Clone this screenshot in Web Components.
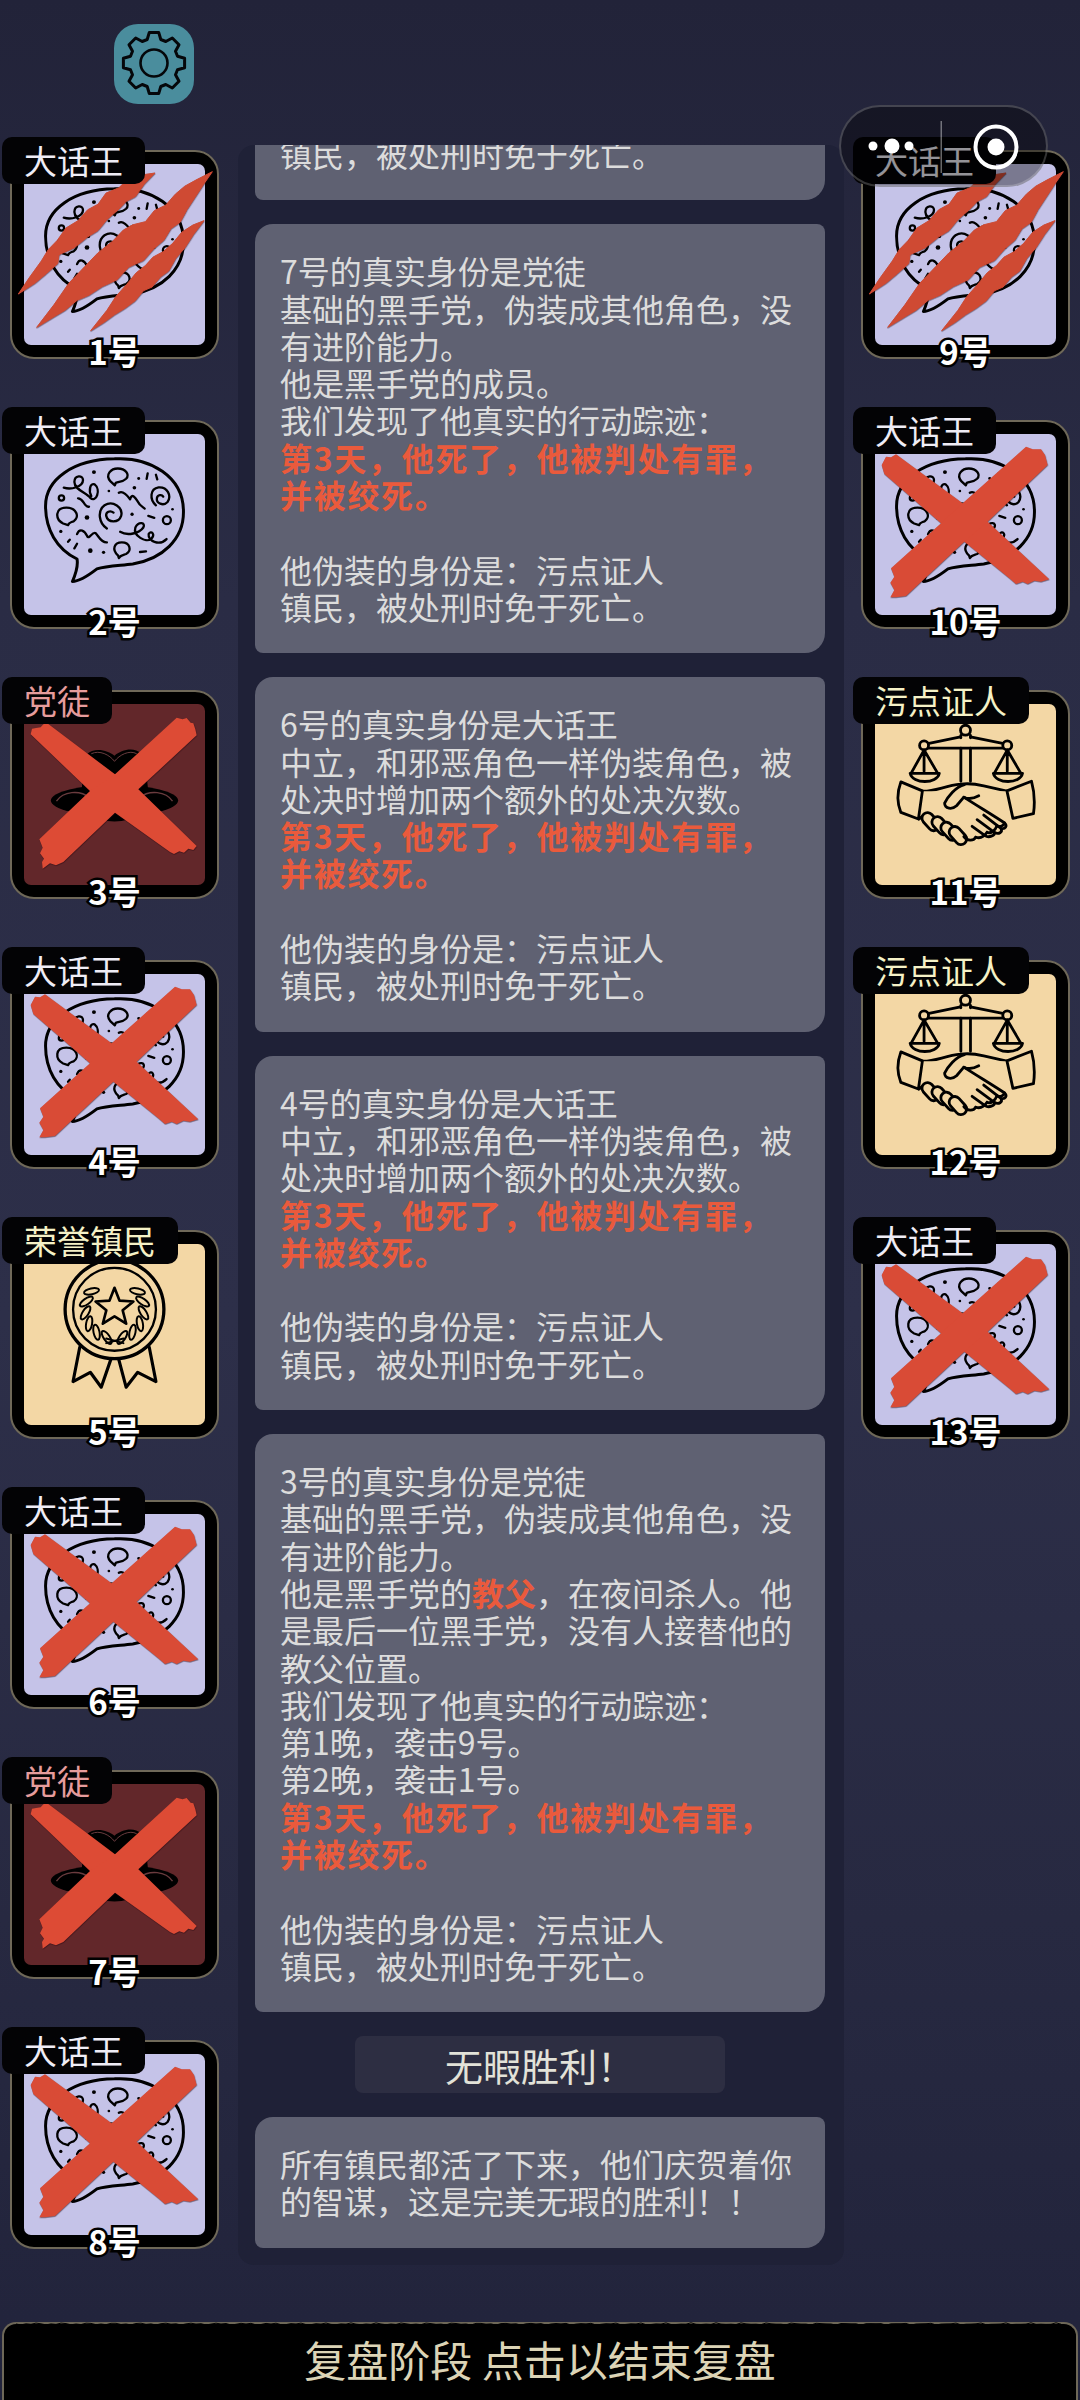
<!DOCTYPE html>
<html lang="zh">
<head>
<meta charset="utf-8">
<title>复盘</title>
<style>
  body { margin: 0; background: #22233a; font-family: "Noto Sans CJK SC", "Noto Sans", sans-serif; }
</style>
</head>
<body>
<review-page>
  <settings-button slot="top"></settings-button>
  <wechat-capsule slot="overlay"></wechat-capsule>

  <role-column slot="left">
    <role-card num="1号" role="大话王" kind="talker" mark="claw"></role-card>
    <role-card num="2号" role="大话王" kind="talker"></role-card>
    <role-card num="3号" role="党徒" kind="party" mark="x"></role-card>
    <role-card num="4号" role="大话王" kind="talker" mark="x"></role-card>
    <role-card num="5号" role="荣誉镇民" kind="honor"></role-card>
    <role-card num="6号" role="大话王" kind="talker" mark="x"></role-card>
    <role-card num="7号" role="党徒" kind="party" mark="x"></role-card>
    <role-card num="8号" role="大话王" kind="talker" mark="x"></role-card>
  </role-column>

  <msg-panel slot="center">
    <msg-card clipped>镇民&#xFF0C;被处刑时免于死亡。</msg-card>
    <msg-card>7号的真实身份是党徒<br>基础的黑手党&#xFF0C;伪装成其他角色&#xFF0C;没有进阶能力。<br>他是黑手党的成员。<br>我们发现了他真实的行动踪迹&#xFF1A;<br><em class="death">第3天&#xFF0C;他死了&#xFF0C;他被判处有罪&#xFF0C;<br>并被绞死。</em><br><br>他伪装的身份是&#xFF1A;污点证人<br>镇民&#xFF0C;被处刑时免于死亡。</msg-card>
    <msg-card>6号的真实身份是大话王<br>中立&#xFF0C;和邪恶角色一样伪装角色&#xFF0C;被处决时增加两个额外的处决次数。<br><em class="death">第3天&#xFF0C;他死了&#xFF0C;他被判处有罪&#xFF0C;<br>并被绞死。</em><br><br>他伪装的身份是&#xFF1A;污点证人<br>镇民&#xFF0C;被处刑时免于死亡。</msg-card>
    <msg-card>4号的真实身份是大话王<br>中立&#xFF0C;和邪恶角色一样伪装角色&#xFF0C;被处决时增加两个额外的处决次数。<br><em class="death">第3天&#xFF0C;他死了&#xFF0C;他被判处有罪&#xFF0C;<br>并被绞死。</em><br><br>他伪装的身份是&#xFF1A;污点证人<br>镇民&#xFF0C;被处刑时免于死亡。</msg-card>
    <msg-card>3号的真实身份是党徒<br>基础的黑手党&#xFF0C;伪装成其他角色&#xFF0C;没有进阶能力。<br>他是黑手党的<em>教父</em>&#xFF0C;在夜间杀人。他是最后一位黑手党&#xFF0C;没有人接替他的教父位置。<br>我们发现了他真实的行动踪迹&#xFF1A;<br>第1晚&#xFF0C;袭击9号。<br>第2晚&#xFF0C;袭击1号。<br><em class="death">第3天&#xFF0C;他死了&#xFF0C;他被判处有罪&#xFF0C;<br>并被绞死。</em><br><br>他伪装的身份是&#xFF1A;污点证人<br>镇民&#xFF0C;被处刑时免于死亡。</msg-card>
    <result-title>无暇胜利&#xFF01;</result-title>
    <msg-card>所有镇民都活了下来&#xFF0C;他们庆贺着你的智谋&#xFF0C;这是完美无瑕的胜利&#xFF01;&#xFF01;</msg-card>
  </msg-panel>

  <role-column slot="right" side="right">
    <role-card num="9号" role="大话王" kind="talker" mark="claw"></role-card>
    <role-card num="10号" role="大话王" kind="talker" mark="x"></role-card>
    <role-card num="11号" role="污点证人" kind="witness"></role-card>
    <role-card num="12号" role="污点证人" kind="witness"></role-card>
    <role-card num="13号" role="大话王" kind="talker" mark="x"></role-card>
  </role-column>

  <review-bar slot="bottom">复盘阶段 点击以结束复盘</review-bar>
</review-page>

<script>
const FONT = `"Noto Sans CJK SC", "Noto Sans", sans-serif`;

class ReviewPage extends HTMLElement {
    constructor() {
        super();
        this.attachShadow({mode: "open"});
        this.shadowRoot.innerHTML = `
        <style>
            :host {
                display: flex;
                flex-direction: column;
                position: relative;
                width: 1080px;
                height: 2400px;
                overflow: hidden;
                font-family: ${FONT};
                background: linear-gradient(#222339 0%, #2a2c45 25%, #2d2f49 55%, #272941 80%, #21233b 100%);
            }
            .top { height: 145px; box-sizing: border-box; padding: 24px 0 0 114px; }
            .main {
                display: grid;
                grid-template-columns: 238px 606px 236px;
                height: 2120px;
            }
            .bottom { margin-top: auto; }
        </style>
        <div class="top"><slot name="top"></slot></div>
        <div class="main">
            <slot name="left"></slot>
            <slot name="center"></slot>
            <slot name="right"></slot>
        </div>
        <div class="bottom"><slot name="bottom"></slot></div>
        <slot name="overlay"></slot>
        `;
    }
}

function gearPath(cx, cy, outer, root, teeth) {
    let d = "";
    const step = Math.PI * 2 / teeth;
    for (let i = 0; i < teeth; i++) {
        const a = -Math.PI / 2 + i * step;
        const pts = [[root, -0.5], [outer, -0.27], [outer, 0.27], [root, 0.5]];
        pts.forEach(([r, k], j) => {
            const t = a + k * step * 0.72;
            d += (i === 0 && j === 0 ? "M" : "L") + (cx + r * Math.cos(t)).toFixed(1) + " " + (cy + r * Math.sin(t)).toFixed(1);
        });
    }
    return d + "Z";
}

class SettingsButton extends HTMLElement {
    constructor() {
        super();
        this.attachShadow({mode: "open"});
        this.shadowRoot.innerHTML = `
        <style>
            :host {
                display: flex;
                width: 80px;
                height: 80px;
                border-radius: 24px;
                background: #4a8d9d;
            }
            svg { width: 80px; height: 80px; }
        </style>
        <svg viewBox="0 0 80 80" fill="none" stroke="#05070a">
            <path d="${gearPath(40, 39, 31, 24.5, 8)}" stroke-width="3" stroke-linejoin="round"/>
            <circle cx="40" cy="39" r="13.5" stroke-width="2.6"/>
        </svg>
        `;
    }
}

class WechatCapsule extends HTMLElement {
    constructor() {
        super();
        this.attachShadow({mode: "open"});
        this.shadowRoot.innerHTML = `
        <style>
            :host {
                position: absolute;
                left: 839px;
                top: 105px;
                width: 209px;
                height: 82px;
                box-sizing: border-box;
                border: 2px solid rgba(255, 255, 255, 0.2);
                border-radius: 41px;
                background: rgba(0, 0, 0, 0.38);
            }
            svg { display: block; position: absolute; left: -2px; top: -2px; }
        </style>
        <svg width="209" height="82" viewBox="0 0 209 82" fill="#fff">
            <circle cx="34" cy="41" r="4.5"/>
            <circle cx="53" cy="41" r="7.5"/>
            <circle cx="70" cy="41" r="4.5"/>
            <rect x="101.5" y="16" width="1.5" height="52" fill="rgba(255,255,255,0.4)"/>
            <circle cx="157" cy="42" r="20.5" fill="none" stroke="#fff" stroke-width="4"/>
            <circle cx="157" cy="42" r="8.5"/>
        </svg>
        `;
    }
}

class RoleColumn extends HTMLElement {
    constructor() {
        super();
        this.attachShadow({mode: "open"});
        this.shadowRoot.innerHTML = `
        <style>
            :host {
                display: flex;
                flex-direction: column;
                gap: 61px;
                padding: 5px 0 0 10px;
            }
            :host([side="right"]) { padding-left: 17px; }
        </style>
        <slot></slot>
        `;
    }
}

// art is drawn in the coordinates of a 3x crop, the viewBox moves it into the card
const dot = (x, y, r) => `<circle cx="${x}" cy="${y}" r="${r}" fill="#000" stroke="none"/>`;
const talkerArt = `
<svg viewBox="72 103 546 546" fill="none" stroke="#000" stroke-width="7" stroke-linecap="round" stroke-linejoin="round">
    <path stroke-width="9" d="M345 178C450 172 555 230 553 340C553 420 490 480 400 495C360 500 320 500 292 510C270 527 240 548 218 548C226 530 236 503 232 480C170 450 137 390 137 320C137 240 220 180 345 178Z"/>
    <path d="M192 265C215 272 250 262 250 242C250 226 224 226 224 248C224 272 262 280 272 296C290 312 305 270 285 255C272 250 266 272 275 290"/>
    <path d="M333 246C315 225 335 207 355 207C378 207 392 225 380 238C370 248 358 246 349 250L346 258Z"/>
    <path d="M190 373C165 360 165 325 200 325C232 325 240 355 222 366C214 370 208 368 205 378Z"/>
    <path d="M356 470C335 450 345 430 367 430C392 430 398 455 380 465C372 468 364 468 358 477Z"/>
    <circle cx="185" cy="296" r="8"/><circle cx="503" cy="363" r="12"/>
    <path d="M235 297C248 297 250 310 258 318C262 322 266 323 268 322"/>
    <path d="M322 388C298 372 292 335 315 318C340 302 372 325 365 350C358 372 325 372 320 350C318 338 332 332 342 340"/>
    <path d="M470 318C450 300 452 268 478 264C505 262 518 290 505 308C492 322 470 312 473 296C475 286 488 285 492 292"/>
    <path d="M358 280C372 272 385 290 392 300C398 280 408 295 414 305C420 318 428 322 436 328"/>
    <path d="M362 398C385 412 420 402 432 385C440 370 418 365 408 385C400 410 440 432 455 420C470 405 455 392 448 405C445 425 480 442 502 420"/>
    <path d="M232 405C240 385 255 395 262 410C268 425 278 395 288 402C298 412 305 432 322 430"/>
    <path d="M445 222L442 238M470 226L474 240M447 350L465 356M205 428L210 422M232 434L224 448M422 459L440 457"/>
    ${dot(283,218,6)}${dot(418,237,4.5)}${dot(405,265,5.5)}${dot(328,275,4)}${dot(262,355,7)}${dot(398,345,5)}${dot(520,330,4)}${dot(183,397,5)}${dot(272,455,7)}${dot(312,460,5)}
</svg>`;

const scaleSide = (x) => `
    <circle cx="${x}" cy="228" r="13.5" fill="#f3d7a5"/>
    <path d="M${x} 242L${x - 38} 310M${x} 242L${x + 40} 310M${x} 242V306"/>
    <path d="M${x - 42} 312H${x + 46}C${x + 40} 345 ${x - 35} 345 ${x - 42} 312Z"/>`;
const finger = (x, y) => `<rect x="${x - 17}" y="${y - 31}" width="34" height="62" rx="17" fill="#f3d7a5" transform="rotate(-42 ${x} ${y})"/>`;
const witnessArt = `
<svg viewBox="162 103 546 546" fill="none" stroke="#000" stroke-width="8.5" stroke-linecap="round" stroke-linejoin="round">
    <path d="M325 222L420 202M450 202L547 222M322 236H548"/>
    <path d="M421 236V336M450 236V336"/>
    <circle cx="435" cy="182" r="15" fill="#f3d7a5"/>
    <path d="M421 198V205M450 198V205"/>
    ${scaleSide(310)}${scaleSide(561)}
    <path d="M304 366C340 368 372 350 420 345C440 342 465 344 490 350L560 366" fill="#f3d7a5"/>
    <path d="M304 366L295 450C330 480 400 515 440 515C480 510 530 490 578 448L560 366"  fill="#f3d7a5" stroke="none"/>
    <path d="M295 450C302 444 306 438 314 436"/>
    ${finger(330,458)}${finger(360,470)}${finger(387,487)}${finger(412,500)}
    <path d="M430 503C440 516 458 518 466 505"/>
    <path d="M466 505C476 508 490 505 500 490M500 490C510 494 524 488 530 470M530 470C540 475 550 470 553 462"/>
    <path d="M430 384C470 410 520 440 553 462C562 470 555 482 542 478L490 438M542 478C548 490 535 498 522 490L470 452M522 490C525 500 505 508 494 500L455 472"/>
    <path d="M432 346C405 352 380 385 372 402C372 420 395 422 408 410L430 384C445 392 460 388 475 380"/>
    <path d="M240 338L305 365L293 450L240 430C228 400 230 365 240 338Z" fill="#f3d7a5"/>
    <path d="M634 336L560 365L578 448L640 434C645 400 642 365 634 336Z" fill="#f3d7a5"/>
</svg>`;

function laurel() {
    let out = "";
    for (let i = 0; i < 6; i++) {
        const a = (218 - i * 22.5) * Math.PI / 180;
        const x = 345 + 88 * Math.cos(a), y = 330 + 88 * Math.sin(a);
        const rot = (218 - i * 22.5) - 50;
        [x, 690 - x].forEach((px, side) => {
            const r = side ? 180 - rot : rot;
            out += `<ellipse cx="${px.toFixed(1)}" cy="${y.toFixed(1)}" rx="23" ry="9" transform="rotate(${r} ${px.toFixed(1)} ${y.toFixed(1)})"/>`;
        });
    }
    return out;
}
function starPoints(cx, cy, R, r) {
    const pts = [];
    for (let i = 0; i < 10; i++) {
        const a = -Math.PI / 2 + i * Math.PI / 5, q = i % 2 ? r : R;
        pts.push((cx + q * Math.cos(a)).toFixed(1) + "," + (cy + q * Math.sin(a)).toFixed(1));
    }
    return pts.join(" ");
}
const honorArt = `
<svg viewBox="72 133 546 546" fill="none" stroke="#000" stroke-width="9.5" stroke-linecap="round" stroke-linejoin="round">
    <path d="M240 445L220 548L272 520L305 565L335 478M450 445L470 548L415 520L380 565L357 478"/>
    <circle cx="345" cy="330" r="149" stroke-width="10" fill="#f3d7a5"/>
    <circle cx="345" cy="330" r="125" stroke-width="7"/>
    <polygon points="${starPoints(345, 325, 60, 26)}" stroke-width="8"/>
    <g stroke-width="6">${laurel()}</g>
    <path d="M320 418L372 432M372 418L320 432" stroke-width="6"/>
</svg>`;

const partyArt = `
<svg viewBox="72 912 546 546">
    <path d="M260 1065C285 1040 325 1052 345 1068C365 1050 405 1040 425 1062C440 1100 445 1150 448 1190H245C248 1150 250 1100 260 1065Z" fill="#000"/>
    <ellipse cx="345" cy="1203" rx="192" ry="47" fill="#000"/>
    <path d="M170 1205C190 1175 240 1170 270 1195M520 1205C500 1175 450 1170 420 1195" fill="none" stroke="#6a3b3e" stroke-width="4"/>
    <path d="M275 1240C300 1275 390 1275 415 1240Z" fill="#000"/>
    <path d="M275 1062C300 1050 330 1065 345 1085C360 1065 390 1050 412 1062" fill="none" stroke="#6a3b3e" stroke-width="3"/>
</svg>`;

const ART = {
    talker: {bg: "#c5c3e8", color: "#efedf6", svg: talkerArt},
    party: {bg: "#62272a", color: "#e69c9c", svg: partyArt},
    honor: {bg: "#f3d7a5", color: "#f5f1c6", svg: honorArt},
    witness: {bg: "#f3d7a5", color: "#f5f1c6", svg: witnessArt},
};

// spreads a claw away from the line between its two tips
function fatten(points, tipIndex, k) {
    const pts = points.trim().split(/\s+/).map(p => p.split(",").map(Number));
    const a = pts[0], b = pts[tipIndex];
    const len = Math.hypot(b[0] - a[0], b[1] - a[1]);
    const nx = -(b[1] - a[1]) / len, ny = (b[0] - a[0]) / len;
    return pts.map(p => {
        const off = (p[0] - a[0]) * nx + (p[1] - a[1]) * ny;
        return (p[0] + off * (k - 1) * nx).toFixed(1) + "," + (p[1] + off * (k - 1) * ny).toFixed(1);
    }).join(" ");
}

// marks are in 3x crop coordinates of the whole card
const clawMark = `
<svg class="mark" viewBox="30 453 627 627">
    <g fill="#cf4a33" stroke="#cf4a33" stroke-width="3" stroke-linejoin="round" style="filter: drop-shadow(1px 2px 1px rgba(40,10,20,.55))">
        <polygon points="${fatten("465,522 425,532 395,540 362,572 325,590 300,622 270,640 240,672 205,695 178,730 150,758 128,790 90,838 55,885 105,850 138,822 172,792 178,768 222,745 262,712 292,692 320,660 352,632 378,606 405,590 432,555", 13, 1.25)}"/>
        <polygon points="${fatten("637,518 590,546 558,566 530,590 500,622 468,640 440,672 405,685 378,702 345,735 302,770 262,810 212,860 165,920 110,985 165,948 192,930 228,900 262,882 300,855 342,832 378,795 420,772 452,738 482,712 505,680 532,660 555,625 580,592 608,555", 14, 1.35)}"/>
        <polygon points="${fatten("612,665 580,680 548,702 520,735 492,760 462,778 440,802 412,825 382,860 350,895 322,935 272,995 312,968 342,945 372,925 402,902 428,872 452,860 478,830 502,812 525,775 552,745 580,705", 11, 1.2)}"/>
    </g>
</svg>`;
const xTalker = `
<svg class="mark" viewBox="60 60 627 627">
    <g fill="#d94b36" style="filter: drop-shadow(1px 2px 2px rgba(30,5,15,.6))">
        <polygon points="122,195 135,170 150,172 165,163 365,310 440,365 625,538 600,545 580,542 560,552 545,545 525,552 505,535 370,425 300,370 130,222"/>
        <polygon points="555,140 575,148 600,148 612,165 620,195 440,365 370,425 195,588 165,592 148,592 160,570 148,548 160,530 150,505 300,370 365,310"/>
    </g>
</svg>`;
const xParty = `
<svg class="mark" viewBox="30 453 627 627">
    <g transform="translate(0,-419)" fill="#dd4b35" style="filter: drop-shadow(1px 2px 2px rgba(30,5,15,.6))">
        <polygon points="92,1005 96,988 108,986 122,984 130,975 142,972 345,1125 415,1170 590,1340 580,1352 565,1348 552,1360 538,1356 522,1364 510,1358 345,1240 270,1175"/>
        <polygon points="530,955 548,960 560,956 572,970 580,972 586,990 590,1008 415,1170 345,1240 190,1388 168,1398 150,1392 128,1408 126,1388 132,1378 120,1362 128,1345 118,1320 270,1175 345,1125"/>
    </g>
</svg>`;

class RoleCard extends HTMLElement {
    constructor() {
        super();
        this.attachShadow({mode: "open"});
    }
    connectedCallback() {
        const kind = this.getAttribute("kind");
        const art = ART[kind];
        const mark = this.getAttribute("mark");
        const x = kind === "party" ? xParty : xTalker;
        this.shadowRoot.innerHTML = `
        <style>
            :host {
                display: block;
                position: relative;
                width: 209px;
                height: 209px;
            }
            .frame {
                box-sizing: border-box;
                width: 209px;
                height: 209px;
                padding: 12px;
                background: #000;
                border: 2px solid #6e6858;
                border-radius: 24px;
            }
            .art {
                width: 181px;
                height: 181px;
                border-radius: 7px;
                overflow: hidden;
                background: ${art.bg};
            }
            .art svg { display: block; width: 181px; height: 181px; }
            .mark { position: absolute; left: 0; top: 0; width: 209px; height: 209px; overflow: visible; }
            .label {
                position: absolute;
                left: -8px;
                top: -13px;
                height: 47px;
                padding: 0 22px;
                border-radius: 10px;
                background: #030305;
                color: ${art.color};
                font-size: 33px;
                line-height: 46px;
                white-space: nowrap;
            }
            .num {
                position: absolute;
                left: 0;
                right: 0;
                bottom: -13px;
                text-align: center;
                color: #fff;
                font-size: 33px;
                font-weight: 700;
                line-height: 42px;
                -webkit-text-stroke: 5px #000;
                paint-order: stroke fill;
            }
        </style>
        <div class="frame"><div class="art">${art.svg}</div></div>
        ${mark === "x" ? x : mark === "claw" ? clawMark : ""}
        <div class="label">${this.getAttribute("role")}</div>
        <div class="num">${this.getAttribute("num")}</div>
        `;
    }
}

class MsgPanel extends HTMLElement {
    constructor() {
        super();
        this.attachShadow({mode: "open"});
        this.shadowRoot.innerHTML = `
        <style>
            :host {
                display: flex;
                flex-direction: column;
                gap: 24px;
                padding: 0 19px 16px 17px;
                overflow: hidden;
                border-radius: 16px;
                background: #1f2137;
            }
        </style>
        <slot></slot>
        `;
    }
}

class MsgCard extends HTMLElement {
    constructor() {
        super();
        this.attachShadow({mode: "open"});
        this.shadowRoot.innerHTML = `
        <style>
            :host {
                display: block;
                flex: none;
                padding: 28px 25px;
                border-radius: 18px 8px 20px 8px;
                background: #5f6172;
                color: #dcdcdc;
                font-size: 32px;
                line-height: 37.3px;
            }
            :host([clipped]) { margin-top: -38px; }
            ::slotted(em) { color: #ea5a3c; font-weight: 700; font-style: normal; }
            ::slotted(em.death) { letter-spacing: 1.7px; }
        </style>
        <slot></slot>
        `;
    }
}

class ResultTitle extends HTMLElement {
    constructor() {
        super();
        this.attachShadow({mode: "open"});
        this.shadowRoot.innerHTML = `
        <style>
            :host {
                display: block;
                flex: none;
                align-self: center;
                width: 370px;
                height: 57px;
                border-radius: 8px;
                background: #2d2e42;
                color: #e2e2d8;
                font-size: 38px;
                line-height: 57px;
                text-align: center;
            }
        </style>
        <slot></slot>
        `;
    }
}

function roughEdge(w) {
    let d = "M0 2";
    for (let x = 5; x <= w; x += 5) {
        d += "L" + x + " " + (2 + 1.2 * Math.sin(x * 0.37) * Math.cos(x * 0.13)).toFixed(1);
    }
    return d;
}

class ReviewBar extends HTMLElement {
    constructor() {
        super();
        this.attachShadow({mode: "open"});
        this.shadowRoot.innerHTML = `
        <style>
            :host {
                display: block;
                position: relative;
                box-sizing: border-box;
                height: 78px;
                margin: 0 2px;
                border: 2px solid #6e6858;
                border-bottom: none;
                border-radius: 14px 14px 0 0;
                background: #000;
                color: #dcd4b6;
                font-size: 42px;
                line-height: 70px;
                text-align: center;
            }
            svg { position: absolute; left: 12px; top: -2px; }
        </style>
        <svg width="1048" height="6" fill="none"><path d="${roughEdge(1048)}" stroke="#000" stroke-width="1"/></svg>
        <slot></slot>
        `;
    }
}

customElements.define("review-page", ReviewPage);
customElements.define("settings-button", SettingsButton);
customElements.define("wechat-capsule", WechatCapsule);
customElements.define("role-column", RoleColumn);
customElements.define("role-card", RoleCard);
customElements.define("msg-panel", MsgPanel);
customElements.define("msg-card", MsgCard);
customElements.define("result-title", ResultTitle);
customElements.define("review-bar", ReviewBar);
</script>
</body>
</html>
